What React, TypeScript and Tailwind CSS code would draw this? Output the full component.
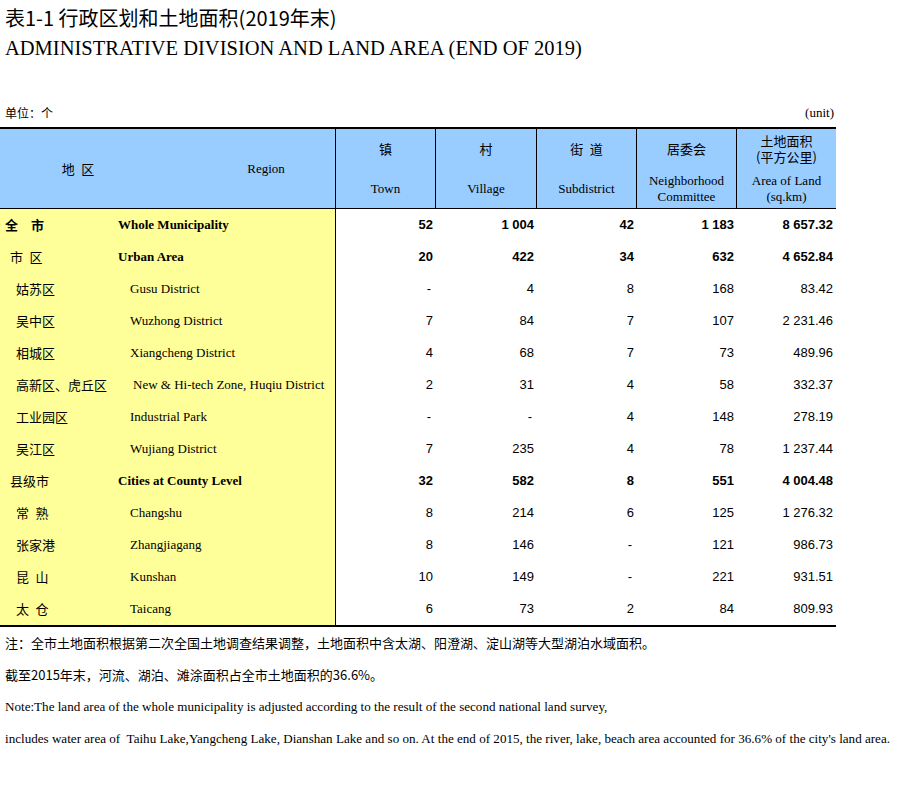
import React from "react";

type Row = {
  zh: string;
  en: string;
  level: 0 | 1 | 2;
  bold?: boolean;
  enBold?: boolean;
  enPad?: number;
  v: string[];
};

const rows: Row[] = [
  { zh: "全\u3000市", en: "Whole Municipality", level: 0, bold: true, enBold: true, v: ["52", "1 004", "42", "1 183", "8 657.32"] },
  { zh: "市\u2002区", en: "Urban Area", level: 1, enBold: true, v: ["20", "422", "34", "632", "4 652.84"] },
  { zh: "姑苏区", en: "Gusu District", level: 2, v: ["-", "4", "8", "168", "83.42"] },
  { zh: "吴中区", en: "Wuzhong District", level: 2, v: ["7", "84", "7", "107", "2 231.46"] },
  { zh: "相城区", en: "Xiangcheng District", level: 2, v: ["4", "68", "7", "73", "489.96"] },
  { zh: "高新区、虎丘区", en: "New & Hi-tech Zone, Huqiu District", level: 2, enPad: 3, v: ["2", "31", "4", "58", "332.37"] },
  { zh: "工业园区", en: "Industrial Park", level: 2, v: ["-", "-", "4", "148", "278.19"] },
  { zh: "吴江区", en: "Wujiang District", level: 2, v: ["7", "235", "4", "78", "1 237.44"] },
  { zh: "县级市", en: "Cities at County Level", level: 1, enBold: true, v: ["32", "582", "8", "551", "4 004.48"] },
  { zh: "常\u2002熟", en: "Changshu", level: 2, v: ["8", "214", "6", "125", "1 276.32"] },
  { zh: "张家港", en: "Zhangjiagang", level: 2, v: ["8", "146", "-", "121", "986.73"] },
  { zh: "昆\u2002山", en: "Kunshan", level: 2, v: ["10", "149", "-", "221", "931.51"] },
  { zh: "太\u2002仓", en: "Taicang", level: 2, v: ["6", "73", "2", "84", "809.93"] },
];

const widths = ["w-[100px]", "w-[101px]", "w-[100px]", "w-[100px]", "w-[99px]"];

function HeadCell({
  top,
  bottom,
  width,
  last,
}: {
  top: React.ReactNode;
  bottom: React.ReactNode;
  width: string;
  last?: boolean;
}) {
  return (
    <div className={`${width} h-full flex flex-col ${last ? "" : "border-r border-black"}`}>
      <div className="h-[40px] flex flex-col items-center justify-center text-[13px] leading-[16px] font-['Noto_Sans_CJK_SC',sans-serif]">
        {top}
      </div>
      <div className="h-[39px] flex flex-col items-center justify-center text-[13px] leading-[16px] font-['Liberation_Serif','Noto_Sans_CJK_SC',serif]">
        {bottom}
      </div>
    </div>
  );
}

export default function App() {
  return (
    <div className="w-[908px] h-[787px] bg-white text-black overflow-hidden">
      <div className="mt-[5px] h-[26px] leading-[26px] pl-[5px] text-[20px] font-['Noto_Sans_CJK_SC',sans-serif] whitespace-pre">
        表1-1 行政区划和土地面积(2019年末)
      </div>
      <div className="mt-[4px] h-[26px] leading-[26px] pl-[5px] text-[20.5px] font-['Liberation_Serif',serif]">
        ADMINISTRATIVE DIVISION AND LAND AREA (END OF 2019)
      </div>
      <div className="mt-[44px] h-[16px] w-[836px] flex justify-between items-center pl-[5px] pr-[2px]">
        <span className="text-[12px] leading-[16px] font-['Noto_Sans_CJK_SC',sans-serif]">单位：个</span>
        <span className="text-[13px] leading-[16px] font-['Liberation_Serif',serif]">(unit)</span>
      </div>

      <div className="mt-[6px] w-[836px] border-t-2 border-b-2 border-black">
        {/* header */}
        <div className="h-[80px] flex bg-[#99ccff] border-b border-black">
          <div className="w-[336px] h-full border-r border-black flex items-center">
            <span className="w-[156px] text-center text-[13px] font-['Noto_Sans_CJK_SC',sans-serif] whitespace-pre">
              地{"\u2002"}区
            </span>
            <span className="ml-auto w-[138px] text-center text-[13px] font-['Liberation_Serif',serif]">Region</span>
          </div>
          <HeadCell width="w-[100px]" top="镇" bottom="Town" />
          <HeadCell width="w-[101px]" top="村" bottom="Village" />
          <HeadCell width="w-[100px]" top={<span className="whitespace-pre">街{"\u2002"}道</span>} bottom="Subdistrict" />
          <HeadCell
            width="w-[100px]"
            top="居委会"
            bottom={
              <>
                <span>Neighborhood</span>
                <span>Committee</span>
              </>
            }
          />
          <HeadCell
            width="w-[99px]"
            last
            top={
              <>
                <span className="block h-[16px]">土地面积</span>
                <span className="block h-[16px]">(平方公里)</span>
              </>
            }
            bottom={
              <>
                <span>Area of Land</span>
                <span>(sq.km)</span>
              </>
            }
          />
        </div>

        {/* body */}
        {rows.map((r, i) => (
          <div key={i} className="h-[32px] flex">
            <div className="w-[336px] h-full bg-[#ffff99] border-r border-black flex items-center">
              <div
                className={`w-[118px] shrink-0 text-[13px] leading-[16px] font-['Noto_Sans_CJK_SC',sans-serif] whitespace-pre ${
                  r.bold ? "font-bold" : ""
                } ${r.level === 0 ? "pl-[5px]" : r.level === 1 ? "pl-[10px]" : "pl-[16px]"}`}
              >
                {r.zh}
              </div>
              <div
                className={`text-[13px] leading-[16px] font-['Liberation_Serif',serif] whitespace-pre ${
                  r.enBold ? "font-bold" : ""
                } ${r.level === 2 ? (r.enPad ? "pl-[15px]" : "pl-[12px]") : ""}`}
              >
                {r.en}
              </div>
            </div>
            {r.v.map((val, j) => (
              <div
                key={j}
                className={`${widths[j]} h-full flex items-center justify-end text-[13px] leading-[16px] font-['Liberation_Sans',sans-serif] whitespace-pre ${
                  r.bold || r.enBold ? "font-bold" : ""
                } ${val === "-" ? "pr-[5px]" : "pr-[3px]"}`}
              >
                {val}
              </div>
            ))}
          </div>
        ))}
      </div>

      <div className="pl-[5px]">
        <div className="h-[32px] leading-[32px] text-[13px] font-['Noto_Sans_CJK_SC',sans-serif] whitespace-pre">
          注：全市土地面积根据第二次全国土地调查结果调整，土地面积中含太湖、阳澄湖、淀山湖等大型湖泊水域面积。
        </div>
        <div className="h-[32px] leading-[32px] text-[13px] font-['Noto_Sans_CJK_SC',sans-serif] whitespace-pre">
          截至2015年末，河流、湖泊、滩涂面积占全市土地面积的36.6%。
        </div>
        <div className="h-[32px] leading-[32px] text-[13.1px] font-['Liberation_Serif',serif] whitespace-pre">
          Note:The land area of the whole municipality is adjusted according to the result of the second national land survey,
        </div>
        <div className="h-[32px] leading-[32px] text-[13.1px] font-['Liberation_Serif',serif] whitespace-pre">
          includes water area of  Taihu Lake,Yangcheng Lake, Dianshan Lake and so on. At the end of 2015, the river, lake, beach area accounted for 36.6% of the city's land area.
        </div>
      </div>
    </div>
  );
}
